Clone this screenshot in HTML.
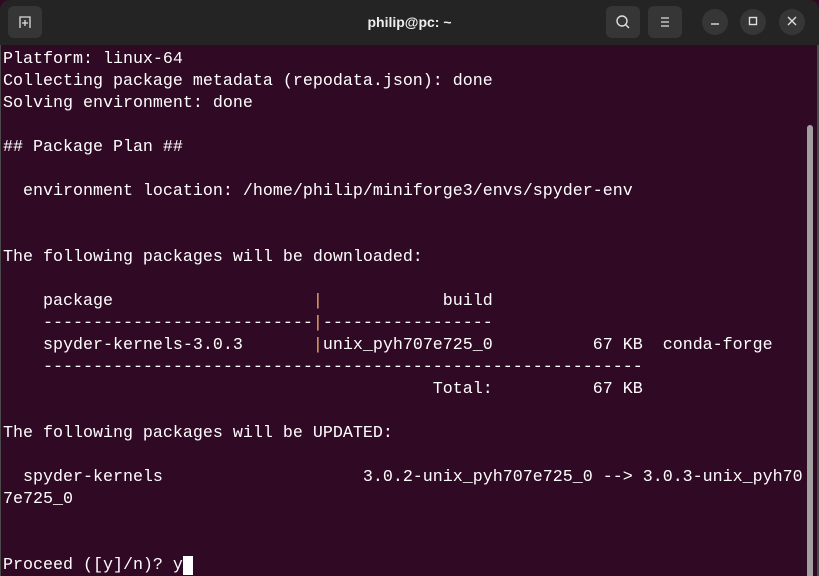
<!DOCTYPE html>
<html><head><style>
html,body{margin:0;width:819px;height:576px;overflow:hidden}
body{background:#300a24;position:relative;font-family:"Liberation Sans",sans-serif}
.tb{position:absolute;left:0;top:0;width:819px;height:45px;background:#242424;border-radius:10px 10px 0 0}
.btn{position:absolute;top:6px;width:34px;height:32px;background:#363636;border-radius:6px;color:#ddd;font-size:15px;text-align:center;line-height:32px}
.rb{position:absolute;top:9px;width:26px;height:26px;border-radius:13px;background:#363636;color:#ddd;text-align:center;line-height:26px;font-size:13px}
.title{position:absolute;top:0;left:0;width:819px;text-align:center;line-height:44px;color:#eee;font-weight:bold;font-size:14px}
pre{position:absolute;left:3px;top:49px;margin:0;font-family:"Liberation Mono",monospace;font-size:16.67px;line-height:22px;color:#ffffff}
.o{color:#e9ad6c}
.cur{background:#fff;color:#300a24}
.sb{position:absolute;left:807px;top:125px;width:6px;height:460px;background:#a0a0a0;border-radius:3px}
.edge{position:absolute;left:817px;top:45px;width:2px;height:531px;background:#4a4a4a}
.ledge{position:absolute;left:0;top:45px;width:1px;height:531px;background:#4a4a4a}
</style></head><body>
<div class="tb"></div>
<div class="btn" style="left:8px"><svg width="16" height="16" viewBox="0 0 16 16" style="margin-top:8px"><path d="M3 14V3h10v11M8 6v6M5 9h6" stroke="#ddd" stroke-width="1.3" fill="none"/></svg></div>
<div class="title">philip@pc: ~</div>
<div class="btn" style="left:606px"><svg width="16" height="16" viewBox="0 0 16 16" style="margin-top:8px"><circle cx="7" cy="7" r="5" stroke="#ddd" stroke-width="1.4" fill="none"/><path d="M10.5 10.5L14 14" stroke="#ddd" stroke-width="1.5"/></svg></div>
<div class="btn" style="left:648px"><svg width="16" height="16" viewBox="0 0 16 16" style="margin-top:8px"><path d="M4 4h8M4 8h8M4 12h8" stroke="#ddd" stroke-width="1.3"/></svg></div>
<div class="rb" style="left:702px"><svg width="10" height="10" viewBox="0 0 10 10"><path d="M1 8h8" stroke="#ddd" stroke-width="1.4"/></svg></div>
<div class="rb" style="left:740px"><svg width="10" height="10" viewBox="0 0 10 10"><rect x="1.5" y="1.5" width="7" height="7" stroke="#ddd" stroke-width="1.4" fill="none"/></svg></div>
<div class="rb" style="left:779px"><svg width="10" height="10" viewBox="0 0 10 10"><path d="M1 1l8 8M9 1l-8 8" stroke="#ddd" stroke-width="1.4"/></svg></div>
<pre>Platform: linux-64
Collecting package metadata (repodata.json): done
Solving environment: done

## Package Plan ##

  environment location: /home/philip/miniforge3/envs/spyder-env


The following packages will be downloaded:

    package                    <span class="o">|</span>            build
    ---------------------------<span class="o">|</span>-----------------
    spyder-kernels-3.0.3       <span class="o">|</span>unix_pyh707e725_0          67 KB  conda-forge
    ------------------------------------------------------------
                                           Total:          67 KB

The following packages will be UPDATED:

  spyder-kernels                    3.0.2-unix_pyh707e725_0 --> 3.0.3-unix_pyh70
7e725_0


Proceed ([y]/n)? y<span class="cur"> </span></pre>
<div class="sb"></div>
<div class="edge"></div><div class="ledge"></div>
</body></html>
